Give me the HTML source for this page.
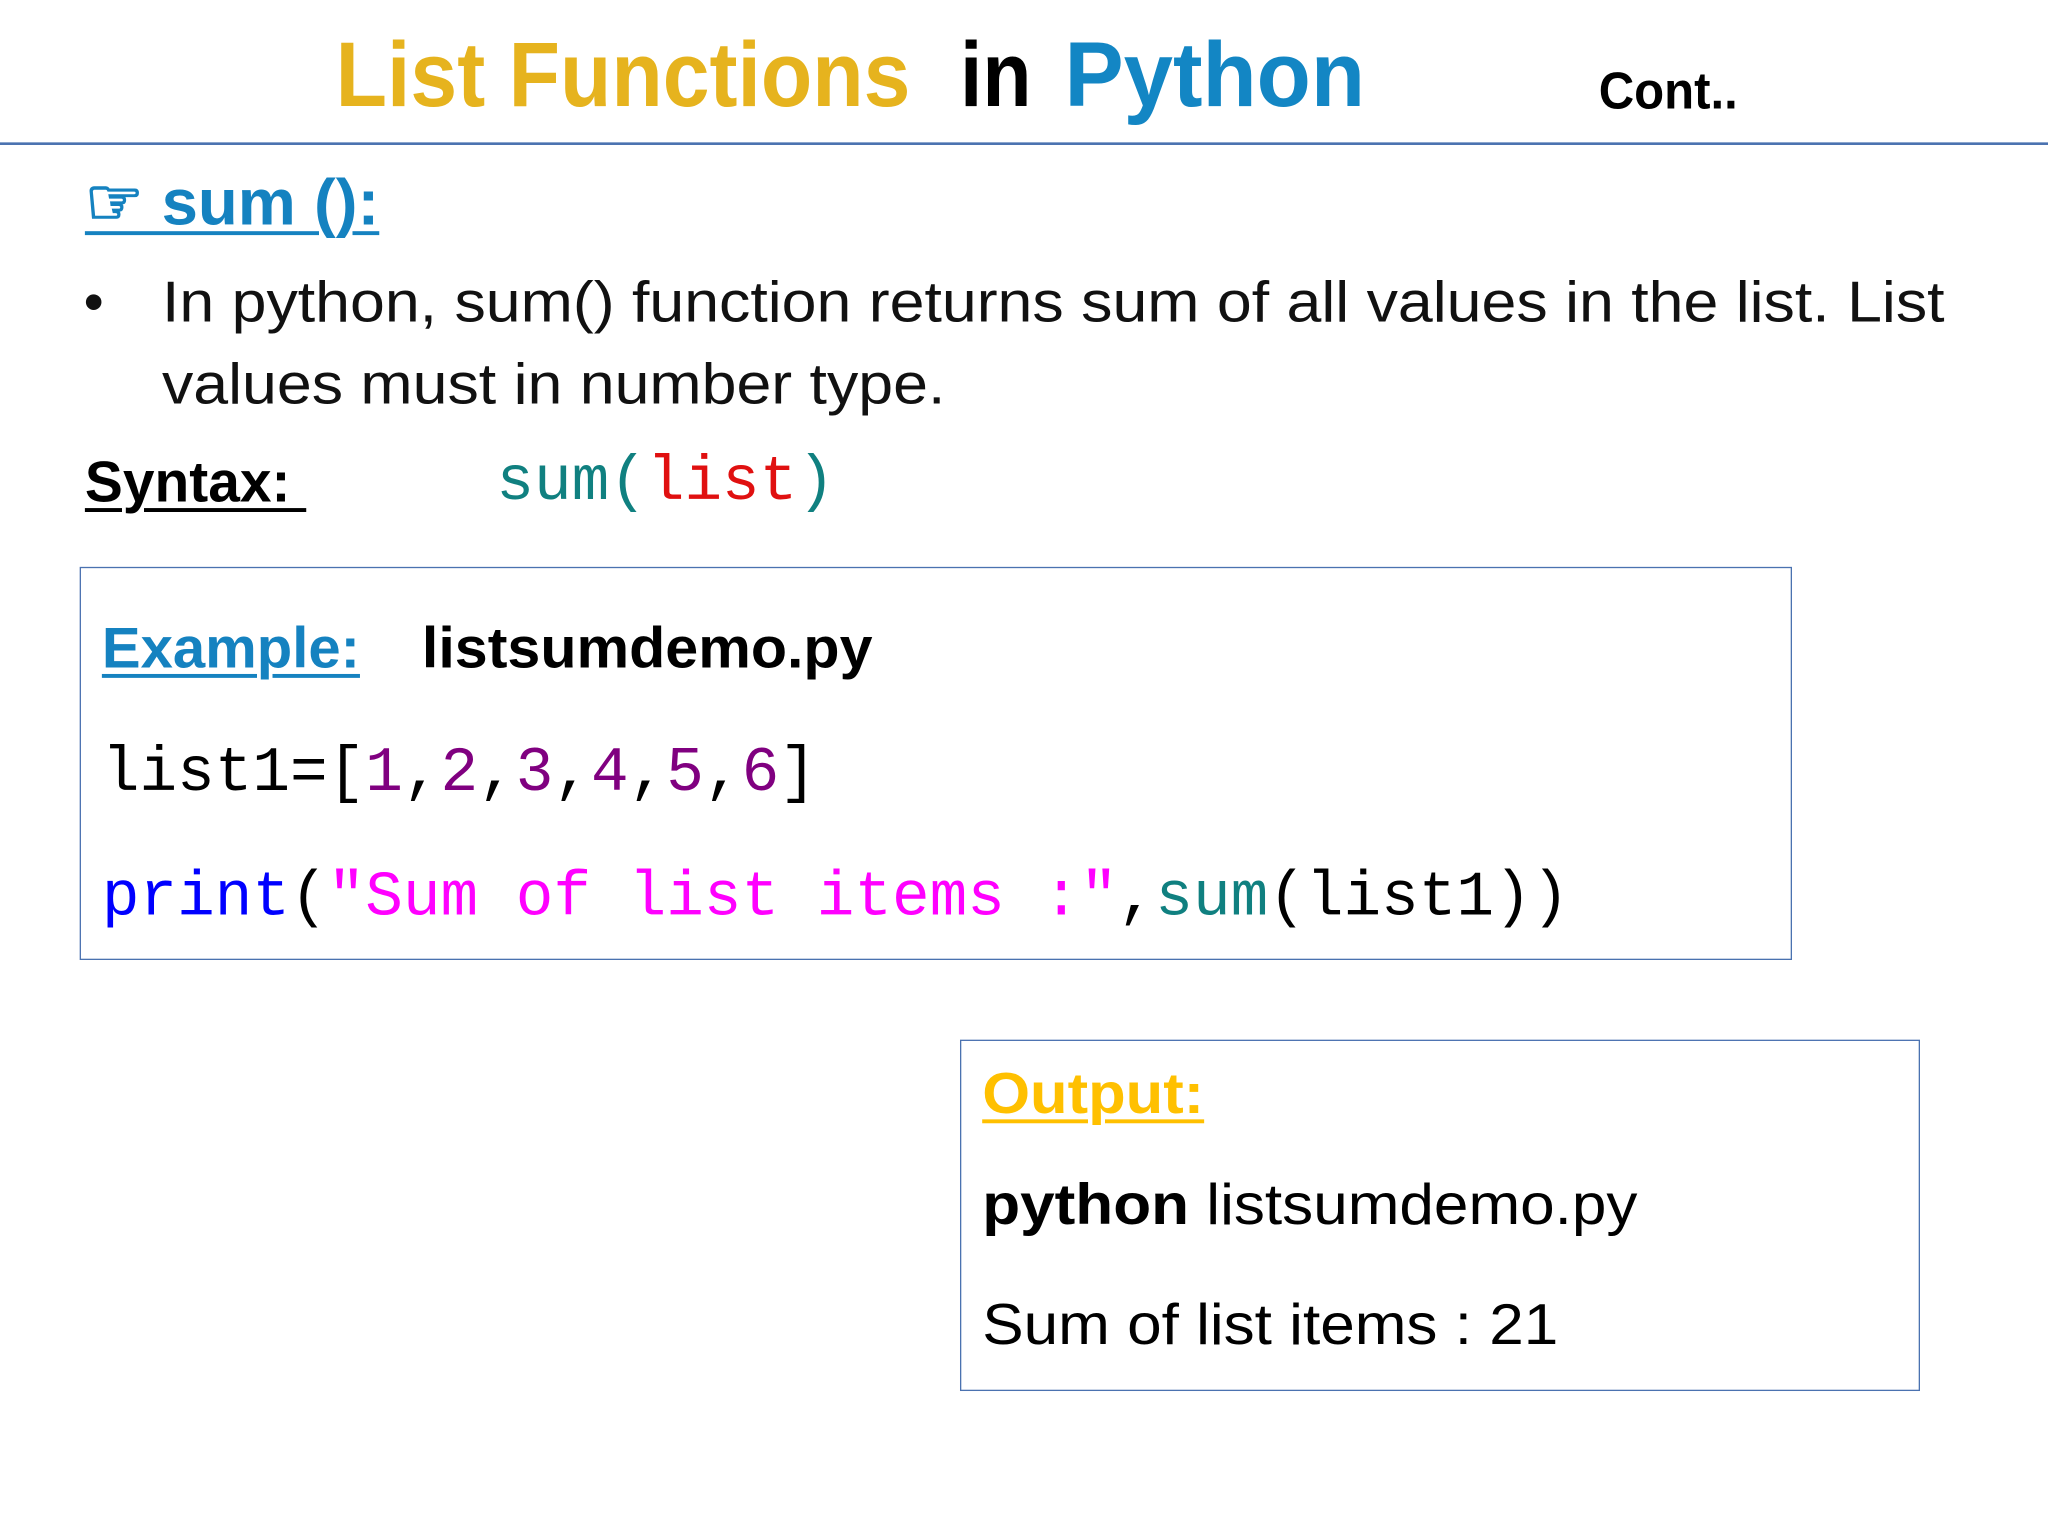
<!DOCTYPE html>
<html><head><meta charset="utf-8"><style>
html,body{margin:0;padding:0;background:#fff;overflow:hidden}
#w{position:absolute;left:0;top:0;width:1568px;height:1176px;transform:scale(1.306122);transform-origin:0 0;font-family:"Liberation Sans",sans-serif}
.a{position:absolute;white-space:nowrap;transform-origin:0 100%;line-height:1}
.m{font-family:"Liberation Mono",monospace}
.b{font-weight:bold}
.u{text-decoration:underline;text-decoration-thickness:3px;text-underline-offset:5px}
</style></head><body><div id="w">
<div class="a b" style="left:257px;top:22px;font-size:70px;transform:scaleX(0.92);color:#E6B31E">List Functions</div>
<div class="a b" style="left:735px;top:22px;font-size:70px;transform:scaleX(0.88);color:#000">in</div>
<div class="a b" style="left:815px;top:22px;font-size:70px;transform:scaleX(0.97);color:#1386C4">Python</div>
<div class="a b" style="left:1224px;top:50px;font-size:40px;transform:scaleX(0.94);color:#000">Cont..</div>
<div style="position:absolute;left:0;top:109px;width:1568px;height:2px;background:#4a72b0"></div>

<div class="a b u" style="left:65px;top:130px;font-size:50px;transform:scaleX(1.0);color:#1582c0">☞ sum ():</div>
<div class="a" style="left:64px;top:210px;font-size:44px;color:#111">•</div>
<div class="a" style="left:124px;top:210px;font-size:44px;transform:scaleX(1.09);color:#111">In python, sum() function returns sum of all values in the list. List</div>
<div class="a" style="left:124px;top:273px;font-size:44px;transform:scaleX(1.09);color:#111">values must in number type.</div>
<div class="a b u" style="left:65px;top:348px;font-size:44px;transform:scaleX(0.99);color:#000">Syntax:&nbsp;</div>
<div class="a m" style="left:380px;top:346px;font-size:48px;color:#108080">sum(<span style="color:#e01010">list</span>)</div>

<div style="position:absolute;left:61px;top:434px;width:1309px;height:299px;border:1.5px solid #4a72b0"></div>
<div class="a b u" style="left:78px;top:475px;font-size:44px;transform:scaleX(1.01);color:#1582c0">Example:</div>
<div class="a b" style="left:323px;top:475px;font-size:44px;transform:scaleX(1.03);color:#000">listsumdemo.py</div>
<div class="a m" style="left:78px;top:569px;font-size:48px;color:#000">list1=[<span style="color:#800080">1</span>,<span style="color:#800080">2</span>,<span style="color:#800080">3</span>,<span style="color:#800080">4</span>,<span style="color:#800080">5</span>,<span style="color:#800080">6</span>]</div>
<div class="a m" style="left:78px;top:664px;font-size:48px;color:#000"><span style="color:#0000ff">print</span>(<span style="color:#ff00ff">"Sum of list items :"</span>,<span style="color:#108080">sum</span>(list1))</div>

<div style="position:absolute;left:735px;top:796px;width:733px;height:267px;border:1.5px solid #4a72b0"></div>
<div class="a b u" style="left:752px;top:816px;font-size:44px;transform:scaleX(1.07);color:#FFC000">Output:</div>
<div class="a" style="left:752px;top:901px;font-size:44px;transform:scaleX(1.08);color:#000"><b>python</b> listsumdemo.py</div>
<div class="a" style="left:752px;top:993px;font-size:44px;transform:scaleX(1.08);color:#000">Sum of list items : 21</div>
</div></body></html>
